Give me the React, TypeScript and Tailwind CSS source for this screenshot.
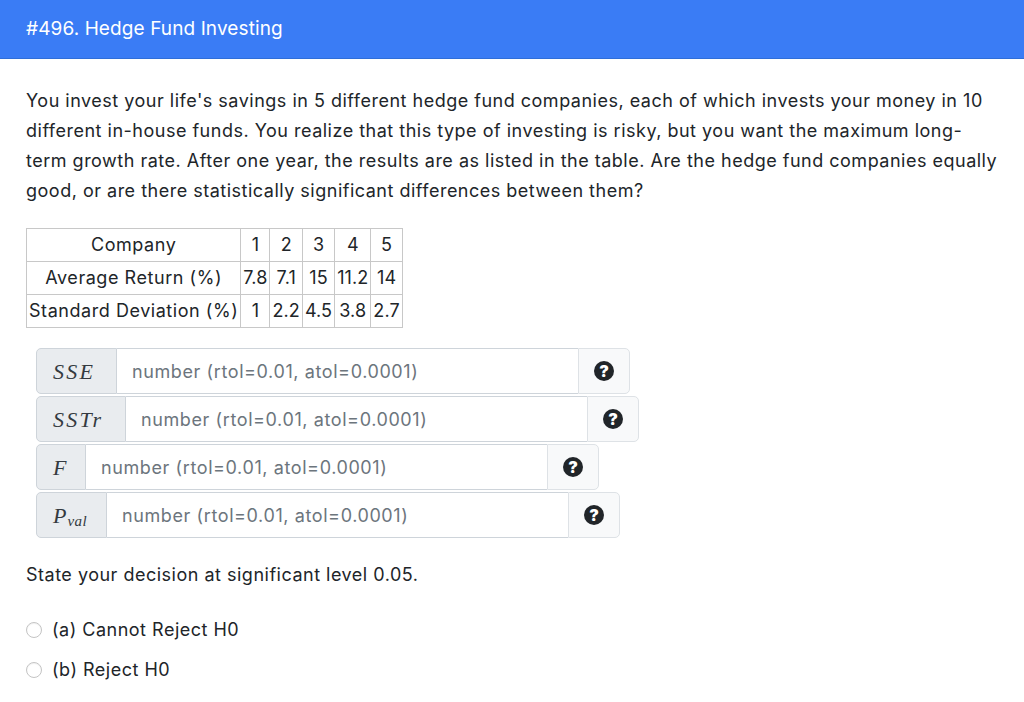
import React from 'react';

const font = { fontFamily: 'Inter, "Liberation Sans", Arial, sans-serif' };
const mathFont = { fontFamily: '"Liberation Serif", "DejaVu Serif", serif' };

function QuestionIcon() {
  return (
    <span className="flex h-[20px] w-[20px] items-center justify-center rounded-full bg-[#212529] text-[16px] leading-none font-black text-white">
      ?
    </span>
  );
}

function Field({ label, width }: { label: React.ReactNode; width: string }) {
  return (
    <div className="inline-flex h-[46px]">
      <div
        className={`flex items-center rounded-l-[5px] border border-[#ced4da] bg-[#e9ecef] pl-[16px] text-[22px] tracking-[0.1em] text-[#343a40] italic ${width}`}
        style={mathFont}
      >
        {label}
      </div>
      <div className="flex w-[461px] items-center border-y border-[#ced4da] bg-white px-[15px] text-[18px] tracking-[0.6px] text-[#6c757d]">
        number (rtol=0.01, atol=0.0001)
      </div>
      <div className="flex w-[52px] items-center justify-center rounded-r-[5px] border border-[#dee2e6] bg-[#f8f9fa]">
        <QuestionIcon />
      </div>
    </div>
  );
}

export default function App() {
  const companies = ['1', '2', '3', '4', '5'];
  const avg = ['7.8', '7.1', '15', '11.2', '14'];
  const sd = ['1', '2.2', '4.5', '3.8', '2.7'];
  const head = 'border border-[#c8c8c8] px-[2px] text-center font-normal';
  const cell = 'border border-[#c8c8c8] px-[2px] text-center tracking-[0.1px]';

  return (
    <div className="min-h-[702px] bg-white text-[#212529]" style={font}>
      <div className="flex h-[59px] items-center border-b border-[#2f6ed8] bg-[#3a7cf5] px-[26px] text-[19px] tracking-[0.1px] text-white">
        #496. Hedge Fund Investing
      </div>

      <div className="pt-[27px] pr-[22px] pl-[26px] tracking-[0.5px]">
        <p className="text-[18px] leading-[30px]">
          You invest your life's savings in 5 different hedge fund companies, each of which invests your money in 10
          different in-house funds. You realize that this type of investing is risky, but you want the maximum long-term
          growth rate. After one year, the results are as listed in the table. Are the hedge fund companies equally
          good, or are there statistically significant differences between them?
        </p>

        <table className="mt-[22px] border-collapse border border-[#555] text-[18px] leading-[32px] tracking-[0.55px]">
          <tbody>
            <tr>
              <th className={head}>Company</th>
              {companies.map((c) => (
                <td key={c} className={cell}>{c}</td>
              ))}
            </tr>
            <tr>
              <th className={head}>Average Return (%)</th>
              {avg.map((c, i) => (
                <td key={i} className={cell}>{c}</td>
              ))}
            </tr>
            <tr>
              <th className={head}>Standard Deviation (%)</th>
              {sd.map((c, i) => (
                <td key={i} className={cell}>{c}</td>
              ))}
            </tr>
          </tbody>
        </table>

        <div className="mt-[20px] flex flex-col items-start gap-[2px] pl-[10px] tracking-normal">
          <Field label="SSE" width="w-[81px]" />
          <Field label="SSTr" width="w-[90px]" />
          <Field label="F" width="w-[50px]" />
          <Field
            width="w-[71px]"
            label={
              <span className="tracking-normal">
                P<sub className="ml-[1px] text-[15px] tracking-[0.5px]">val</sub>
              </span>
            }
          />
        </div>

        <p className="mt-[22px] text-[18px] leading-[30px]">State your decision at significant level 0.05.</p>

        <div className="mt-[25px] flex flex-col gap-[10px] text-[18px] leading-[30px]">
          {['(a) Cannot Reject H0', '(b) Reject H0'].map((t) => (
            <label key={t} className="flex items-center gap-[10px]">
              <span className="inline-block h-[16px] w-[16px] rounded-full border border-[#c4c4c4] bg-white shadow-[inset_0_1px_1px_rgba(0,0,0,0.06)]" />
              {t}
            </label>
          ))}
        </div>
      </div>
    </div>
  );
}
